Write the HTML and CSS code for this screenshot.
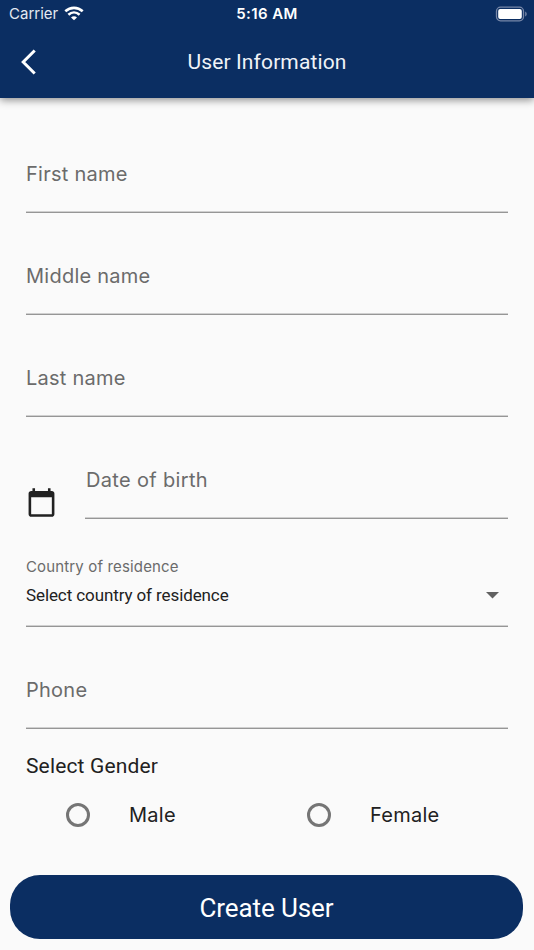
FILE: index.html
```
<!DOCTYPE html>
<html lang="en">
<head>
    <meta charset="UTF-8">
    <meta name="viewport" content="width=device-width, initial-scale=1.0">
    <title>User Information</title>
    <link rel="stylesheet" href="styles.css">
</head>
<body>
    <header class="app-header">
        <div class="status-bar">
            <div class="carrier">
                <span>Carrier</span>
                <svg width="20" height="15" viewBox="0 0 20 15" fill="none" stroke="#fff" stroke-width="2.6">
                    <path d="M1.3 5.3C6.3.7 13.7.7 18.7 5.3"/>
                    <path d="M4.4 8.7C7.7 5.8 12.3 5.8 15.6 8.7"/>
                    <path d="M10 14.2L7 11.4C8.7 9.9 11.3 9.9 13 11.4Z" fill="#fff" stroke="none"/>
                </svg>
            </div>
            <div class="time">5:16 AM</div>
            <div class="battery">
                <svg width="32" height="16" viewBox="0 0 32 16">
                    <rect x="1.5" y="1.2" width="27" height="13.6" rx="4" fill="none" stroke="#7787a8" stroke-width="1.3"/>
                    <rect x="3.2" y="3" width="23.6" height="10" rx="2" fill="#fff"/>
                    <path d="M30.2 5.6c2 .9 2 3.9 0 4.8z" fill="#7787a8"/>
                </svg>
            </div>
        </div>
        <div class="nav-bar">
            <a href="#" class="back" aria-label="Back">
                <svg width="16" height="26" viewBox="0 0 16 26" fill="none" stroke="#fff" stroke-width="3">
                    <path d="M14.7 1.5L3.2 13L14.7 24.5"/>
                </svg>
            </a>
            <h1>User Information</h1>
        </div>
    </header>

    <form class="user-form">
        <div class="field"><label>First name</label></div>
        <div class="field"><label>Middle name</label></div>
        <div class="field"><label>Last name</label></div>
        <div class="date-row">
            <svg class="calendar" width="31" height="31" viewBox="0 0 24 24" fill="#212121">
                <path d="M20 3h-1V1h-2v2H7V1H5v2H4c-1.1 0-2 .9-2 2v16c0 1.1.9 2 2 2h16c1.1 0 2-.9 2-2V5c0-1.1-.9-2-2-2zm0 18H4V8h16v13z"/>
            </svg>
            <div class="field"><label>Date of birth</label></div>
        </div>
        <div class="select-field">
            <label>Country of residence</label>
            <div class="select-value">
                <span>Select country of residence</span>
                <svg width="13" height="7" viewBox="0 0 13 7"><path d="M0 0h13L6.5 6.5z" fill="#616161"/></svg>
            </div>
        </div>
        <div class="field"><label>Phone</label></div>

        <div class="gender-title">Select Gender</div>
        <div class="gender-options">
            <label class="option"><span class="radio"></span><span>Male</span></label>
            <label class="option"><span class="radio"></span><span>Female</span></label>
        </div>
    </form>

    <button type="button" class="create-button">Create User</button>
</body>
</html>
```
FILE: styles.css
```
* {
    box-sizing: border-box;
}

body {
    margin: 0;
    height: 950px;
    background-color: #fafafa;
    font-family: Roboto, sans-serif;
    color: #212121;
    overflow: hidden;
}

.app-header {
    height: 98px;
    background-color: #0b2e62;
    color: #fff;
    box-shadow: 0 2px 8px rgba(0, 0, 0, 0.45);
}

.status-bar {
    display: grid;
    grid-template-columns: 1fr auto 1fr;
    height: 27px;
    padding: 0 7px 0 9px;
    align-items: center;
    font-family: Inter, sans-serif;
    font-size: 15px;
}

.carrier {
    display: flex;
    align-items: center;
    gap: 6px;
    color: #e4e9f1;
}

.time {
    margin-right: 2px;
    font-weight: 600;
    letter-spacing: 0.4px;
}

.battery {
    display: flex;
    justify-content: flex-end;
}

.nav-bar {
    display: grid;
    grid-template-columns: 1fr auto 1fr;
    align-items: center;
    height: 70px;
    padding: 0 20px;
}

.back {
    display: flex;
}

.nav-bar h1 {
    margin: 0;
    font-size: 21px;
    font-weight: 400;
    letter-spacing: 0.13px;
    color: #f0f3f7;
}

.user-form {
    padding: 13px 26px 0;
}

.field {
    display: flex;
    flex-direction: column;
    justify-content: flex-end;
    height: 102px;
    padding-bottom: 26px;
    border-bottom: 1px solid #969696;
    box-shadow: inset 0 -1px 0 #d0d0d0;
}

.field label {
    font-family: Inter, sans-serif;
    font-size: 20px;
    line-height: 24px;
    letter-spacing: 0.25px;
    color: #6b6b6b;
}

.date-row {
    display: flex;
    align-items: flex-end;
    gap: 28px;
}

.date-row .field {
    flex: 1;
}

.date-row .field label {
    letter-spacing: 0.33px;
    padding-left: 1px;
}

.calendar {
    display: block;
    margin-bottom: 1px;
}

.select-field {
    height: 108px;
    padding-top: 37px;
    border-bottom: 1px solid #969696;
    box-shadow: inset 0 -1px 0 #d0d0d0;
}

.select-field label {
    display: block;
    font-family: Inter, sans-serif;
    font-size: 15px;
    line-height: 22px;
    letter-spacing: 0.15px;
    color: #6b6b6b;
}

.select-value {
    display: flex;
    justify-content: space-between;
    align-items: center;
    height: 22px;
    margin-top: 6px;
    padding-right: 9px;
    font-size: 17px;
    letter-spacing: -0.1px;
}

.gender-title {
    margin-top: 23px;
    font-size: 21px;
    line-height: 28px;
    letter-spacing: 0.15px;
}

.gender-options {
    display: grid;
    grid-template-columns: 1fr 1fr;
    margin-top: 20px;
}

.option {
    display: flex;
    align-items: center;
    gap: 39px;
    height: 30px;
    padding-left: 40px;
    font-family: Inter, sans-serif;
    font-size: 20px;
    letter-spacing: 0.25px;
}

.radio {
    width: 24px;
    height: 24px;
    border: 3px solid #757575;
    border-radius: 50%;
}

.create-button {
    display: block;
    width: 513px;
    height: 64px;
    margin: 45px 0 0 10px;
    padding-top: 3px;
    border: none;
    border-radius: 30px;
    background-color: #0b2e62;
    color: #fff;
    font-family: Roboto, sans-serif;
    font-size: 26px;
    letter-spacing: -0.1px;
}
```
